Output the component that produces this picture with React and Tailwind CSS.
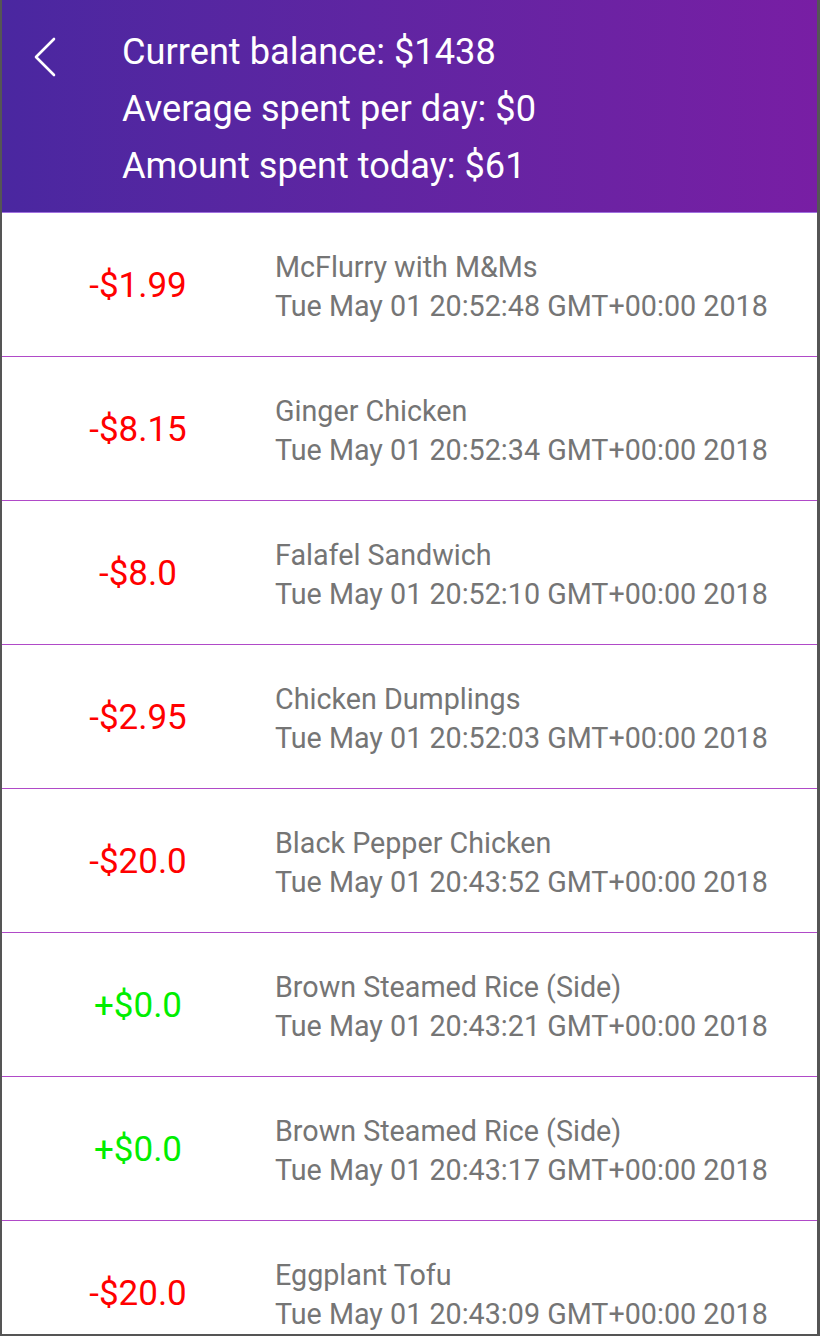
const transactions = [
  { amount: '-$1.99', name: 'McFlurry with M&Ms', date: 'Tue May 01 20:52:48 GMT+00:00 2018' },
  { amount: '-$8.15', name: 'Ginger Chicken', date: 'Tue May 01 20:52:34 GMT+00:00 2018' },
  { amount: '-$8.0', name: 'Falafel Sandwich', date: 'Tue May 01 20:52:10 GMT+00:00 2018' },
  { amount: '-$2.95', name: 'Chicken Dumplings', date: 'Tue May 01 20:52:03 GMT+00:00 2018' },
  { amount: '-$20.0', name: 'Black Pepper Chicken', date: 'Tue May 01 20:43:52 GMT+00:00 2018' },
  { amount: '+$0.0', name: 'Brown Steamed Rice (Side)', date: 'Tue May 01 20:43:21 GMT+00:00 2018' },
  { amount: '+$0.0', name: 'Brown Steamed Rice (Side)', date: 'Tue May 01 20:43:17 GMT+00:00 2018' },
  { amount: '-$20.0', name: 'Eggplant Tofu', date: 'Tue May 01 20:43:09 GMT+00:00 2018' },
];

const TransactionRow = ({ amount, name, date }) => {
  const isCredit = amount.startsWith('+');
  return (
    <div className="flex items-center h-[144px] border-b border-[#b04ac8] shrink-0">
      <div
        className={`w-[272px] text-center text-[35px] pt-[4px] ${
          isCredit ? 'text-[#00ee00]' : 'text-[#ff0000]'
        }`}
      >
        {amount}
      </div>
      <div className="flex flex-col text-[#757575] text-[28.7px] leading-[39px] pl-[1px] pt-[4px]">
        <span>{name}</span>
        <span>{date}</span>
      </div>
    </div>
  );
};

export default function App() {
  return (
    <div
      className="w-[820px] h-[1336px] overflow-hidden bg-white border-l-2 border-r-[3px] border-b-2 border-[#555555] flex flex-col"
      style={{ fontFamily: 'Roboto, "Noto Sans", sans-serif' }}
    >
      {/* Header */}
      <div className="h-[213px] shrink-0 flex bg-linear-to-r from-[#4a27a0] to-[#781ea4] border-b border-[#a070e0]">
        <div className="w-[120px] pl-[30px] pt-[36px]">
          <svg width="26" height="42" viewBox="0 0 26 42" fill="none">
            <path d="M22 3 L4 21 L22 39" stroke="white" strokeWidth="2.6" strokeLinecap="round" strokeLinejoin="round" />
          </svg>
        </div>
        <div className="flex flex-col text-white text-[36.2px] leading-[57px] pt-[23px]">
          <span>Current balance: $1438</span>
          <span>Average spent per day: $0</span>
          <span>Amount spent today: $61</span>
        </div>
      </div>

      {/* Transactions */}
      <div className="flex flex-col">
        {transactions.map((t, i) => (
          <TransactionRow key={i} {...t} />
        ))}
      </div>
    </div>
  );
}
